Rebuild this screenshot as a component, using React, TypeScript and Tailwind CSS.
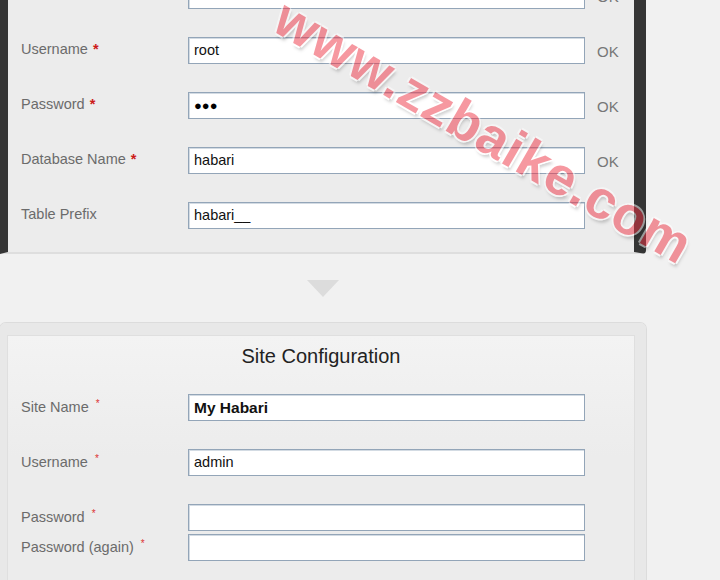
import React from "react";

type Row = { label: string; required?: boolean; value?: string; ok?: boolean; dots?: boolean; bold?: boolean };

const dbRows: Row[] = [
  { label: "Database Host", required: true, value: "localhost", ok: true },
  { label: "Username", required: true, value: "root", ok: true },
  { label: "Password", required: true, dots: true, ok: true },
  { label: "Database Name", required: true, value: "habari", ok: true },
  { label: "Table Prefix", value: "habari__" },
];

const Field = ({ row }: { row: Row }) => (
  <div
    className={`w-[397px] h-[27px] shrink-0 bg-white border border-[#93a5b8] shadow-[inset_1px_1px_0_#d3dbe3] flex items-center px-[5px] text-[#111] ${
      row.bold ? "font-bold text-[15.5px]" : "text-[14.5px]"
    }`}
  >
    {row.dots ? <span className="text-[13px] tracking-[0px] text-black">●●●</span> : row.value}
  </div>
);

const App: React.FC = () => {
  return (
    <div className="relative w-[720px] h-[580px] overflow-hidden bg-[#f1f1f1] font-['Liberation_Sans',Arial,sans-serif]">
      {/* Database panel (active) */}
      <div className="w-[646px] -mt-[30px] border-l-[8px] border-r-[12px] border-b-2 border-l-[#353535] border-r-[#353535] border-b-[#dedede] rounded-br-[4px] bg-[#ececec] pt-[12px] pb-[23px] pl-[13px]">
        <div className="flex flex-col gap-[28px]">
          {dbRows.map((row) => (
            <div key={row.label} className="flex items-start h-[27px]">
              <div className="w-[167px] shrink-0 pt-[2px] text-[14.5px] leading-[20px] text-[#6b6b6b]">
                {row.label}
                {row.required && <span className="ml-[5px] font-bold text-[#cc1a1a]">*</span>}
              </div>
              <Field row={row} />
              {row.ok && <div className="ml-[12px] pt-[3px] text-[15px] leading-[24px] text-[#777]">OK</div>}
            </div>
          ))}
        </div>
      </div>

      {/* step arrow */}
      <div className="w-[646px] h-[69px] flex items-center justify-center">
        <div className="w-0 h-0 border-l-[16px] border-r-[16px] border-t-[17px] border-l-transparent border-r-transparent border-t-[#dcdcdc]" />
      </div>

      {/* Site configuration panel */}
      <div className="w-[646px] border-t-[12px] border-l-[7px] border-r-[11px] border-[#e8e8e8] rounded-t-[6px] shadow-[0_0_0_1px_#dcdcdc]">
        <div className="border-x border-t border-[#dfdfdf] bg-[linear-gradient(#f3f3f3,#ececec_120px)] pt-[6px] pl-[13px] pb-[40px]">
          <h2 className="text-center text-[20px] leading-[28px] text-[#222] pr-[13px]">Site Configuration</h2>
          <div className="mt-[24px] flex flex-col">
            {[
              { label: "Site Name", value: "My Habari", bold: true, gap: "" },
              { label: "Username", value: "admin", gap: "mt-[28px]" },
              { label: "Password", value: "", gap: "mt-[28px]" },
              { label: "Password (again)", value: "", gap: "mt-[3px]" },
            ].map((r) => (
              <div key={r.label} className={`flex items-start ${r.gap}`}>
                <div className="w-[167px] shrink-0 pt-[3px] text-[14.5px] leading-[20px] text-[#6b6b6b]">
                  {r.label}
                  <span className="ml-[7px] align-top text-[10px] leading-[14px] text-[#dd3333]">*</span>
                </div>
                <Field row={{ label: r.label, value: r.value, bold: r.bold }} />
              </div>
            ))}
          </div>
        </div>
      </div>

      {/* watermark */}
      <div className="pointer-events-none absolute left-[484px] top-[131px] -translate-x-1/2 -translate-y-1/2 rotate-[30deg] whitespace-nowrap opacity-50 font-['Liberation_Sans',Arial,sans-serif] font-bold text-[54px] leading-none tracking-[1px] text-[#ee3344] [text-shadow:2px_0_0_#fff,-2px_0_0_#fff,0_2px_0_#fff,0_-2px_0_#fff,3px_3px_3px_rgba(0,0,0,0.35)]">
        www.zzbaike.com
      </div>
    </div>
  );
};

export default App;
